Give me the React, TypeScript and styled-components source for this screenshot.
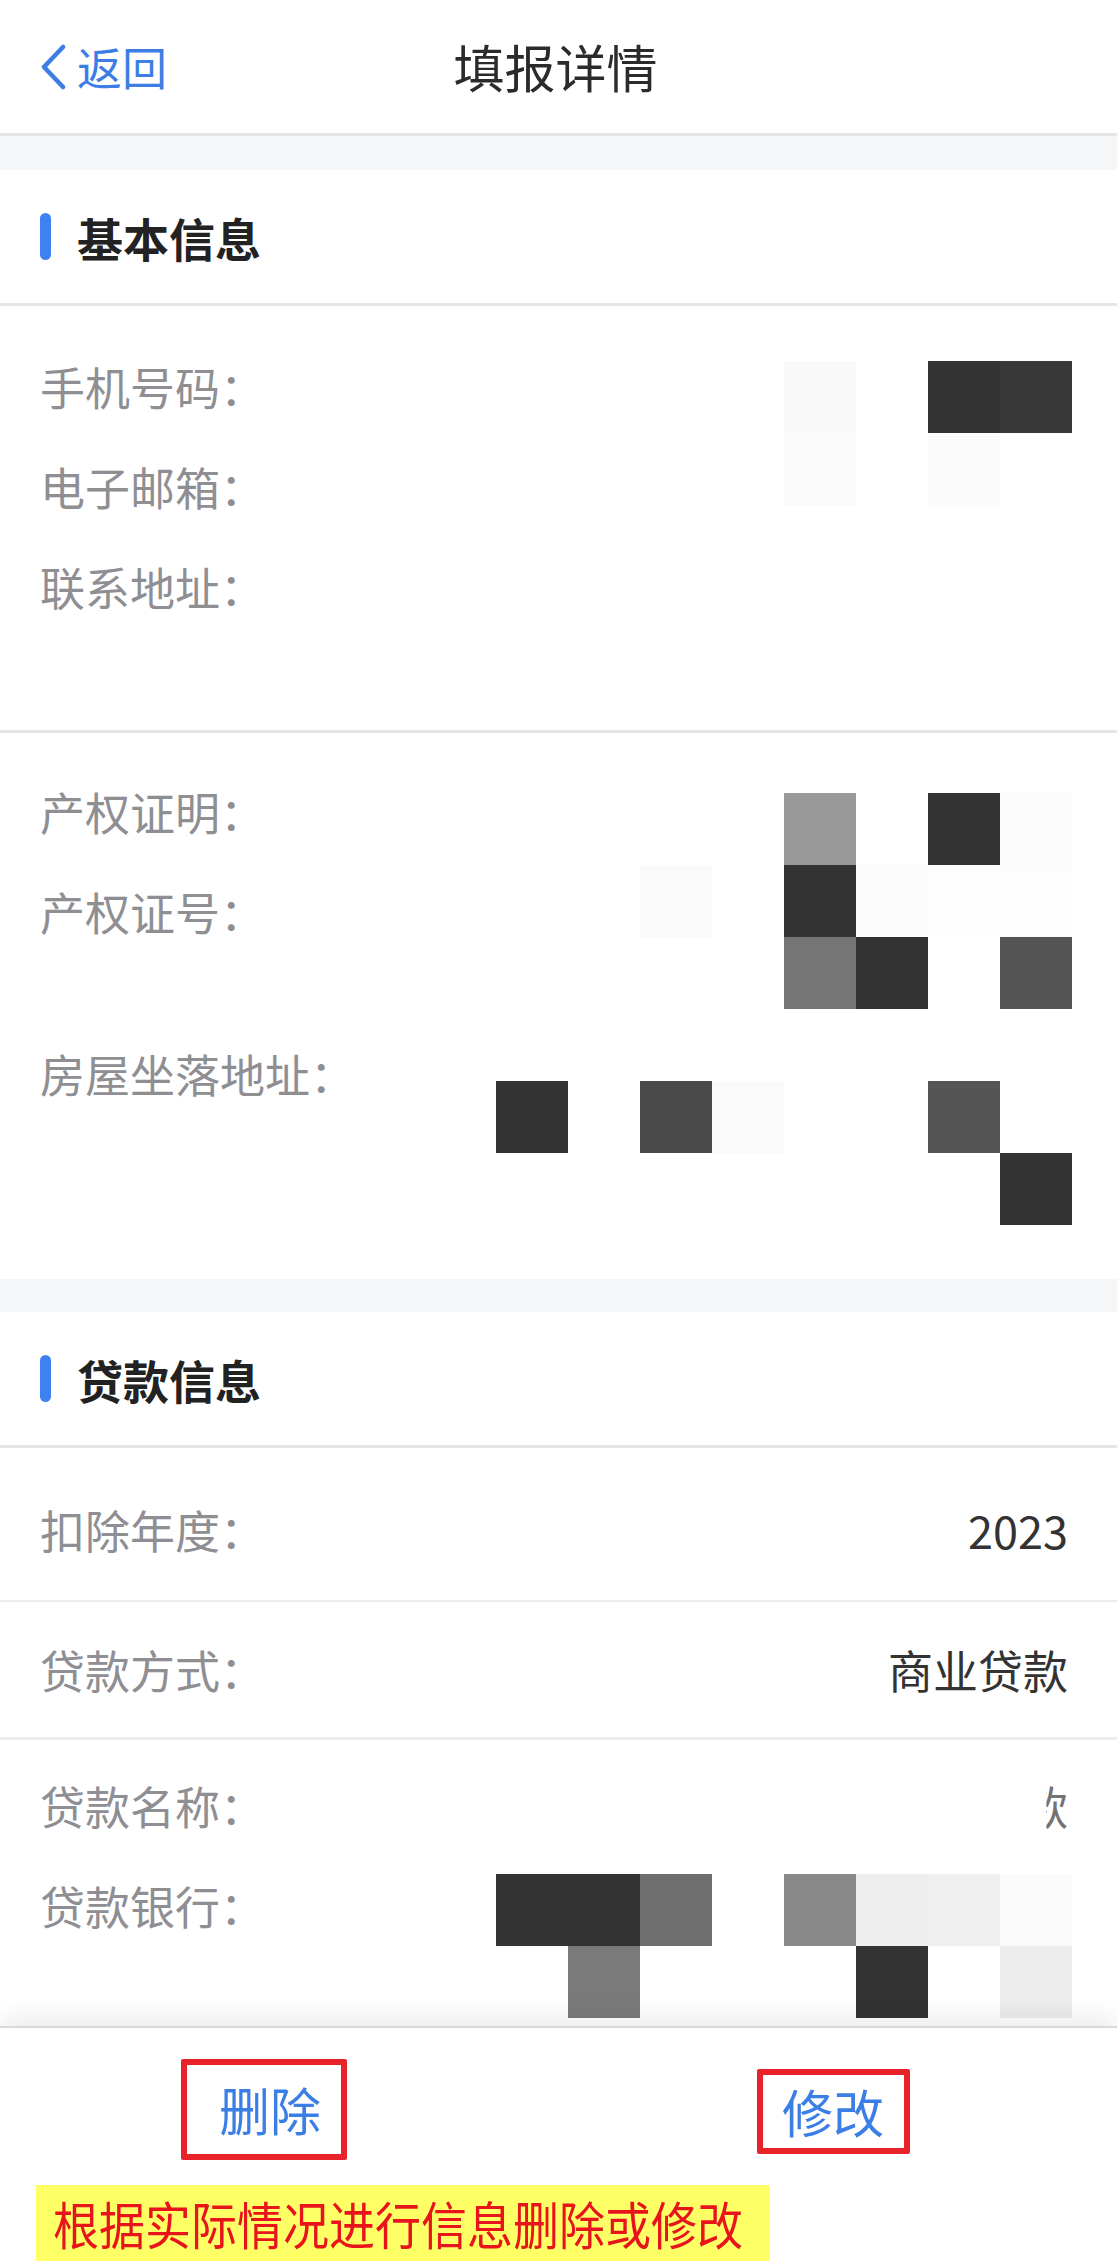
import styled, { createGlobalStyle } from "styled-components";

const GlobalStyle = createGlobalStyle`
  html, body {
    margin: 0;
    padding: 0;
    background: #ffffff;
  }
  body {
    font-family: "Noto Sans CJK SC", "Noto Sans", sans-serif;
  }
`;

const Page = styled.div`
  width: 1117px;
  height: 2265px;
  display: flex;
  flex-direction: column;
  overflow: hidden;
  background: #f5f6f8;
`;

const Main = styled.main`
  flex: 1;
  min-height: 0;
  overflow: hidden;
  display: flex;
  flex-direction: column;

  & > * {
    flex-shrink: 0;
  }
`;

const NavBar = styled.header`
  height: 133px;
  display: grid;
  grid-template-columns: 1fr auto 1fr;
  align-items: center;
  background: #ffffff;
  border-bottom: 3px solid #e3e4e6;
`;

const BackButton = styled.div`
  display: flex;
  align-items: center;
  gap: 10px;
  padding-left: 39px;
  color: #3d7ee6;
  font-size: 45px;
  line-height: 1;

  svg {
    width: 28px;
    height: 46px;
    flex-shrink: 0;
  }
`;

const NavTitle = styled.h1`
  margin: 0 0 0 -6px;
  font-size: 51px;
  font-weight: 400;
  color: #2b2b2b;
  line-height: 1;
`;

const Band = styled.div<{ $h: number }>`
  height: ${({ $h }) => $h}px;
  background: #f5f6f8;
`;

const Card = styled.section`
  background: #ffffff;
`;

const SectionHeader = styled.div`
  height: 133px;
  display: flex;
  align-items: center;
  gap: 26px;
  padding-left: 40px;
  border-bottom: 3px solid #e6e6e8;
`;

const AccentBar = styled.span`
  width: 11px;
  height: 47px;
  border-radius: 6px;
  background: #3d82f0;
`;

const SectionTitle = styled.h2`
  margin: 0;
  font-size: 46px;
  font-weight: 700;
  color: #222222;
  line-height: 1;
`;

const InfoGroup = styled.div<{ $top: number; $divider?: boolean }>`
  position: relative;
  padding: ${({ $top }) => $top}px 0 0 40px;
  border-bottom: ${({ $divider }) => ($divider ? "3px solid #e6e6e8" : "none")};
`;

const InfoLine = styled.div<{ $h: number }>`
  height: ${({ $h }) => $h}px;
  display: flex;
  align-items: flex-start;
  justify-content: space-between;
  padding-right: 49px;
`;

const Label = styled.span`
  font-size: 45px;
  line-height: 100px;
  color: #8e8e93;
  white-space: nowrap;
`;

const Value = styled.span`
  font-size: 45px;
  line-height: 100px;
  color: #333333;
`;

const FadedValue = styled(Value)`
  color: #444444;
  opacity: 0.75;
  clip-path: inset(0 0 0 52%);
`;

const PlainRow = styled.div<{ $h: number; $shift: number; $last?: boolean }>`
  height: ${({ $h }) => $h}px;
  box-sizing: border-box;
  padding: ${({ $shift }) => $shift}px 49px 0 40px;
  display: flex;
  align-items: center;
  justify-content: space-between;
  border-bottom: ${({ $last }) => ($last ? "3px" : "2px")} solid #ececee;
  ${Label}, ${Value} {
    line-height: 1;
  }
`;

const Mosaic = styled.div<{ $top: number }>`
  position: absolute;
  top: ${({ $top }) => $top}px;
  right: 45px;
  display: grid;
  grid-template-columns: repeat(8, 72px);
  grid-auto-rows: 72px;
`;

const MosaicCell = styled.span<{ $c: string | null }>`
  background: ${({ $c }) => $c ?? "transparent"};
`;

const Footer = styled.footer`
  position: relative;
  z-index: 1;
  height: 239px;
  flex-shrink: 0;
  box-sizing: border-box;
  background: #ffffff;
  border-top: 2px solid #d9d9db;
  box-shadow: 0 -10px 22px rgba(0, 0, 0, 0.07);
  display: flex;
  flex-direction: column;
`;

const ButtonRow = styled.div`
  height: 157px;
  box-sizing: border-box;
  display: flex;
  align-items: flex-start;
  padding: 31px 0 0 181px;
`;

const ActionButton = styled.button<{ $pl: number; $pr: number; $py: number; $mt?: number; $ml?: number }>`
  margin: ${({ $mt = 0 }) => $mt}px 0 0 ${({ $ml = 0 }) => $ml}px;
  padding: ${({ $py }) => $py}px ${({ $pr }) => $pr}px ${({ $py }) => $py}px
    ${({ $pl }) => $pl}px;
  border: 6px solid #e8222a;
  border-radius: 2px;
  background: #ffffff;
  color: #3b7fe6;
  font-family: "Noto Sans CJK SC", sans-serif;
  font-size: 51px;
  line-height: 1;
  cursor: pointer;
`;

const Note = styled.div`
  margin-left: 36px;
  width: 734px;
  height: 76px;
  box-sizing: border-box;
  padding-left: 17px;
  display: flex;
  align-items: center;
  background: #ffff66;
  color: #e8141c;
  font-size: 46px;
  line-height: 1;

  span {
    display: inline-block;
    transform: scaleY(1.1);
  }
`;

type Cell = string | null;

const contactMosaic: Cell[][] = [
  [null, null, null, null, "#f9f9f9", null, "#333333", "#383838"],
  [null, null, null, null, "#fafafa", null, "#fbfbfb", null],
];

const propertyMosaic: Cell[][] = [
  [null, null, null, null, "#999999", null, "#333333", "#fcfcfc"],
  [null, null, "#fafafa", null, "#333333", "#fcfcfc", "#fdfdfd", "#fdfdfd"],
  [null, null, null, null, "#757575", "#333333", null, "#555555"],
  [null, null, null, null, null, null, null, null],
  ["#333333", null, "#4a4a4a", "#fafafa", null, null, "#555555", null],
  [null, null, null, null, null, null, null, "#333333"],
];

const bankMosaic: Cell[][] = [
  ["#333333", "#333333", "#6e6e6e", null, "#888888", "#eeeeee", "#efefef", "#fafafa"],
  [null, "#7a7a7a", null, null, null, "#333333", null, "#ececec"],
];

function MosaicBlock({ top, rows }: { top: number; rows: Cell[][] }) {
  return (
    <Mosaic $top={top}>
      {rows.flat().map((c, i) => (
        <MosaicCell key={i} $c={c} />
      ))}
    </Mosaic>
  );
}

function ChevronLeft() {
  return (
    <svg viewBox="0 0 28 46" fill="none">
      <polyline
        points="24,3 5,23 24,43"
        stroke="currentColor"
        strokeWidth="4.5"
        strokeLinecap="round"
        strokeLinejoin="round"
      />
    </svg>
  );
}

export default function App() {
  return (
    <>
      <GlobalStyle />
      <Page>
        <Main>
          <NavBar>
            <BackButton>
              <ChevronLeft />
              <span>返回</span>
            </BackButton>
            <NavTitle>填报详情</NavTitle>
            <div />
          </NavBar>

          <Band $h={34} />

          <Card>
            <SectionHeader>
              <AccentBar />
              <SectionTitle>基本信息</SectionTitle>
            </SectionHeader>

            <InfoGroup $top={31} $divider>
              <InfoLine $h={100}>
                <Label>手机号码：</Label>
              </InfoLine>
              <InfoLine $h={100}>
                <Label>电子邮箱：</Label>
              </InfoLine>
              <InfoLine $h={193}>
                <Label>联系地址：</Label>
              </InfoLine>
              <MosaicBlock top={55} rows={contactMosaic} />
            </InfoGroup>

            <InfoGroup $top={29}>
              <InfoLine $h={100}>
                <Label>产权证明：</Label>
              </InfoLine>
              <InfoLine $h={162}>
                <Label>产权证号：</Label>
              </InfoLine>
              <InfoLine $h={255}>
                <Label>房屋坐落地址：</Label>
              </InfoLine>
              <MosaicBlock top={60} rows={propertyMosaic} />
            </InfoGroup>
          </Card>

          <Band $h={33} />

          <Card>
            <SectionHeader>
              <AccentBar />
              <SectionTitle>贷款信息</SectionTitle>
            </SectionHeader>

            <PlainRow $h={154} $shift={10}>
              <Label>扣除年度：</Label>
              <Value>2023</Value>
            </PlainRow>
            <PlainRow $h={138} $shift={0} $last>
              <Label>贷款方式：</Label>
              <Value>商业贷款</Value>
            </PlainRow>

            <InfoGroup $top={16}>
              <InfoLine $h={100}>
                <Label>贷款名称：</Label>
                <FadedValue>款</FadedValue>
              </InfoLine>
              <InfoLine $h={200}>
                <Label>贷款银行：</Label>
              </InfoLine>
              <MosaicBlock top={134} rows={bankMosaic} />
            </InfoGroup>
          </Card>
        </Main>

        <Footer>
          <ButtonRow>
            <ActionButton $pl={32} $pr={20} $py={19}>
              删除
            </ActionButton>
            <ActionButton $pl={19} $pr={20} $py={11} $mt={10} $ml={410}>
              修改
            </ActionButton>
          </ButtonRow>
          <Note>
            <span>根据实际情况进行信息删除或修改</span>
          </Note>
        </Footer>
      </Page>
    </>
  );
}
